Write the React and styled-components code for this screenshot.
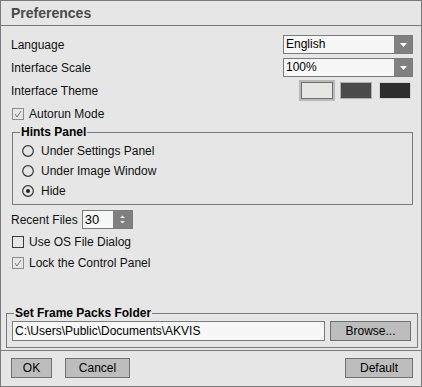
import styled, { createGlobalStyle } from 'styled-components';

const GlobalStyle = createGlobalStyle`
  body {
    margin: 0;
    background: #e6e6e6;
    font-family: "Liberation Sans", Arial, sans-serif;
    font-size: 12px;
    color: #111;
  }
`;

const Window = styled.div`
  width: 422px;
  height: 387px;
  box-sizing: border-box;
  border: 1px solid #7a7a7a;
  background: #e6e6e6;
  display: flex;
  flex-direction: column;
`;

const TitleBar = styled.div`
  height: 24px;
  border-bottom: 1px solid #7a7a7a;
  display: flex;
  align-items: center;
  padding-left: 10px;
`;

const Title = styled.div`
  font-size: 14px;
  font-weight: bold;
  color: #4a4a4a;
`;

const Body = styled.div`
  flex: 1;
  display: flex;
  flex-direction: column;
  padding: 7px 8px 0 10px;
`;

const Row = styled.div`
  height: ${(p) => p.$h || 23}px;
  display: flex;
  align-items: center;
  justify-content: ${(p) => (p.$spread ? 'space-between' : 'flex-start')};
  margin-top: ${(p) => p.$mt || 0}px;
`;

const Dropdown = styled.div`
  width: 130px;
  height: 19px;
  box-sizing: border-box;
  border: 1px solid #7b7b7b;
  background: #f7f7f7;
  display: flex;
`;

const DropValue = styled.div`
  flex: 1;
  padding-left: 2px;
  line-height: 17px;
  color: #000;
`;

const DropArrow = styled.div`
  width: 18px;
  background: #808080;
  display: flex;
  align-items: center;
  justify-content: center;
`;

const Swatches = styled.div`
  display: flex;
  gap: 7px;
  margin-right: 2px;
`;

const Swatch = styled.div`
  width: 32px;
  height: 17px;
  box-sizing: border-box;
  background: ${(p) => p.$fill};
  border: 1px solid ${(p) => p.$edge};
  box-shadow: ${(p) => (p.$selected ? '0 0 0 2px #b9b9b9' : 'none')};
`;

const CheckRow = styled.label`
  height: ${(p) => p.$h || 21}px;
  display: flex;
  align-items: center;
  gap: 5px;
  padding-left: 1px;
`;

const Box = styled.span`
  width: 12px;
  height: 12px;
  box-sizing: border-box;
  border: 1px solid ${(p) => (p.$checked ? '#8c8c8c' : '#3c3c3c')};
  display: flex;
  align-items: center;
  justify-content: center;
`;

const Group = styled.fieldset`
  margin: 0 0 0 1px;
  min-width: 0;
  border: 1px solid #7b7b7b;
  padding: 2px 0 3px 7px;
`;

const Legend = styled.legend`
  padding: 0 1px;
  margin-left: ${(p) => p.$ml || 0}px;
  font-weight: bold;
  font-size: 12px;
  line-height: 14px;
  color: #000;
`;

const RadioRow = styled.label`
  height: 20px;
  display: flex;
  align-items: center;
  gap: 7px;
  padding-left: 2px;
`;

const Spin = styled.div`
  margin-left: 4px;
  width: 51px;
  height: 19px;
  box-sizing: border-box;
  border: 1px solid #7b7b7b;
  background: #f7f7f7;
  display: flex;
`;

const SpinValue = styled.div`
  flex: 1;
  padding-left: 2px;
  line-height: 17px;
  font-size: 13px;
  color: #000;
`;

const SpinButton = styled.div`
  width: 19px;
  background: #7f7f7f;
  display: flex;
  align-items: center;
  justify-content: center;
`;

const FolderGroup = styled.fieldset`
  margin: auto 3px 2px 5px;
  min-width: 0;
  border: 1px solid #7b7b7b;
  padding: 1px 6px 6px 5px;
`;

const FolderRow = styled.div`
  display: flex;
  gap: 5px;
`;

const PathInput = styled.div`
  flex: 1;
  height: 20px;
  box-sizing: border-box;
  border: 1px solid #7b7b7b;
  background: #f7f7f7;
  padding-left: 2px;
  line-height: 18px;
  color: #000;
`;

const Button = styled.button`
  width: ${(p) => p.$w}px;
  height: 20px;
  box-sizing: border-box;
  margin: 0;
  margin-left: ${(p) => (p.$push ? 'auto' : `${p.$ml || 0}px`)};
  padding: 0;
  border: 1px solid #707070;
  background: #bdbdbd;
  font-family: "Liberation Sans", Arial, sans-serif;
  font-size: 12px;
  color: #000;
`;

const Footer = styled.div`
  border-top: 1px solid #7b7b7b;
  padding: 7px 8px 8px 10px;
  display: flex;
`;

const DownTri = () => (
  <svg width="7" height="4" viewBox="0 0 7 4">
    <polygon points="0,0 7,0 3.5,4" fill="#ffffff" />
  </svg>
);

const SpinArrows = () => (
  <svg width="7" height="11" viewBox="0 0 7 11">
    <polygon points="1,4 6,4 3.5,1.5" fill="#e8e8e8" />
    <polygon points="1,7 6,7 3.5,9.5" fill="#e8e8e8" />
  </svg>
);

const Checkbox = ({ checked, label, h }) => (
  <CheckRow $h={h}>
    <Box $checked={checked}>
      {checked && (
        <svg width="10" height="10" viewBox="0 0 10 10">
          <polyline points="2,5 4,8 8,2" fill="none" stroke="#7a7a7a" strokeWidth="1" />
        </svg>
      )}
    </Box>
    {label}
  </CheckRow>
);

const Radio = ({ checked, label }) => (
  <RadioRow>
    <svg width="12" height="12" viewBox="0 0 12 12">
      <circle cx="6" cy="6" r="5.3" fill="none" stroke="#333" strokeWidth="1.2" />
      {checked && <circle cx="6" cy="6" r="2" fill="#222" />}
    </svg>
    {label}
  </RadioRow>
);

const Select = ({ value }) => (
  <Dropdown>
    <DropValue>{value}</DropValue>
    <DropArrow>
      <DownTri />
    </DropArrow>
  </Dropdown>
);

export default function App() {
  return (
    <>
      <GlobalStyle />
      <Window>
        <TitleBar>
          <Title>Preferences</Title>
        </TitleBar>
        <Body>
          <Row $spread>
            Language
            <Select value="English" />
          </Row>
          <Row $spread>
            Interface Scale
            <Select value="100%" />
          </Row>
          <Row $spread>
            Interface Theme
            <Swatches>
              <Swatch $fill="#e6e6e3" $edge="#707070" $selected />
              <Swatch $fill="#4b4b4b" $edge="#b0b0b0" />
              <Swatch $fill="#2e2e2e" $edge="#d2d2d2" />
            </Swatches>
          </Row>
          <Checkbox checked label="Autorun Mode" h={23} />
          <Group>
            <Legend>Hints Panel</Legend>
            <Radio label="Under Settings Panel" />
            <Radio label="Under Image Window" />
            <Radio checked label="Hide" />
          </Group>
          <Row $mt={3}>
            Recent Files
            <Spin>
              <SpinValue>30</SpinValue>
              <SpinButton>
                <SpinArrows />
              </SpinButton>
            </Spin>
          </Row>
          <Checkbox label="Use OS File Dialog" />
          <Checkbox checked label="Lock the Control Panel" />
        </Body>
        <FolderGroup>
          <Legend $ml={2}>Set Frame Packs Folder</Legend>
          <FolderRow>
            <PathInput>C:\Users\Public\Documents\AKVIS</PathInput>
            <Button $w={81}>Browse...</Button>
          </FolderRow>
        </FolderGroup>
        <Footer>
          <Button $w={41}>OK</Button>
          <Button $w={65} $ml={13}>Cancel</Button>
          <Button $w={68} $push>Default</Button>
        </Footer>
      </Window>
    </>
  );
}
